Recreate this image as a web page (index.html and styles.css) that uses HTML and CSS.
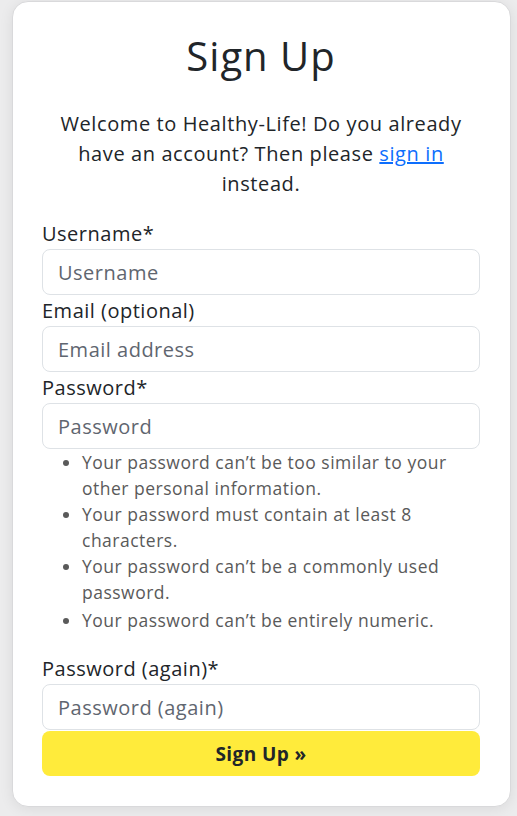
FILE: index.html
```html
<!DOCTYPE html>
<html lang="en">
<head>
<meta charset="utf-8">
<title>Sign Up</title>
<link rel="stylesheet" href="styles.css">
</head>
<body>
<main class="card">
  <h1 class="title">Sign Up</h1>
  <p class="intro">Welcome to Healthy-Life! Do you already have an account? Then please <a href="#" class="link">sign in</a> instead.</p>
  <form class="form">
    <label class="label" for="u">Username*</label>
    <input class="input" id="u" type="text" placeholder="Username">
    <label class="label" for="e">Email (optional)</label>
    <input class="input" id="e" type="email" placeholder="Email address">
    <label class="label" for="p">Password*</label>
    <input class="input" id="p" type="password" placeholder="Password">
    <ul class="help">
      <li>Your password can’t be too similar to your other personal information.</li>
      <li>Your password must contain at least 8 characters.</li>
      <li>Your password can’t be a commonly used password.</li>
      <li>Your password can’t be entirely numeric.</li>
    </ul>
    <label class="label" for="p2">Password (again)*</label>
    <input class="input" id="p2" type="password" placeholder="Password (again)">
    <button class="btn" type="submit">Sign Up »</button>
  </form>
</main>
</body>
</html>
```
FILE: styles.css
```css
html, body {
  margin: 0;
  padding: 0;
}
body {
  background: #ececed;
  font-family: "Open Sans", "DejaVu Sans", sans-serif;
  color: #212529;
  height: 816px;
  overflow: hidden;
}
.card {
  margin: 1px 6px 0 12px;
  background: #fff;
  border: 1px solid #d9d9db;
  border-radius: 16px;
  box-shadow: 0 2px 14px rgba(0,0,0,0.08);
  padding: 30px 30px 30px 29px;
}
.title {
  margin: 0;
  text-align: center;
  font-weight: 400;
  font-size: 40px;
  line-height: 48px;
  letter-spacing: 1px;
}
.intro {
  margin: 29px 0 19px;
  text-align: center;
  font-size: 20px;
  line-height: 30px;
  letter-spacing: 0.6px;
}
.link {
  color: #0d6efd;
  text-decoration: underline;
}
.form {
  display: flex;
  flex-direction: column;
}
.label {
  font-size: 20px;
  line-height: 31px;
  letter-spacing: 0.5px;
}
.input {
  box-sizing: border-box;
  height: 46px;
  border: 1px solid #dee2e6;
  border-radius: 8px;
  padding: 0 15px;
  font-family: inherit;
  font-size: 20px;
  letter-spacing: 0.5px;
  color: #212529;
  background: #fff;
  outline: none;
}
.input::placeholder {
  color: #5f6670;
}
.help {
  margin: 0 0 20px;
  padding-left: 40px;
  color: #5a5a5a;
  font-size: 17.5px;
  line-height: 26px;
  letter-spacing: 0.5px;
}
.help li:last-child {
  margin-top: 2px;
}
.btn {
  height: 45px;
  margin-top: 1px;
  border: none;
  border-radius: 8px;
  background: #ffeb3b;
  color: #212529;
  font-family: inherit;
  font-weight: 700;
  font-size: 19px;
  letter-spacing: 0.4px;
}
```
